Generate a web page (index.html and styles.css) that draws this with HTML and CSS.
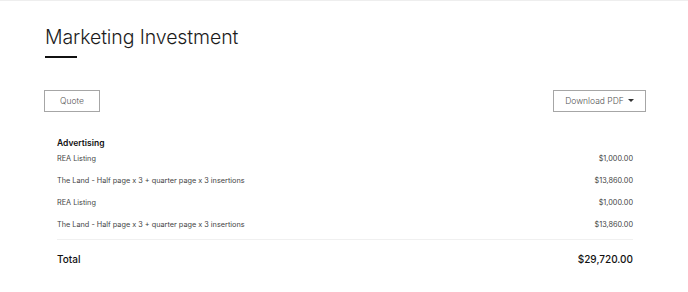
FILE: index.html
```html
<!DOCTYPE html>
<html lang="en">
<head>
<meta charset="utf-8">
<title>Marketing Investment</title>
<link rel="stylesheet" href="styles.css">
</head>
<body>
<main class="page">
  <header class="heading">
    <h1 class="title">Marketing Investment</h1>
    <span class="title-rule"></span>
  </header>

  <div class="toolbar">
    <button class="btn" type="button">Quote</button>
    <button class="btn btn-pdf" type="button">Download PDF <span class="caret"></span></button>
  </div>

  <section class="costs">
    <h2 class="group">Advertising</h2>
    <ul class="items">
      <li class="item"><span>REA Listing</span><span>$1,000.00</span></li>
      <li class="item"><span>The Land - Half page x 3 + quarter page x 3 insertions</span><span>$13,860.00</span></li>
      <li class="item"><span>REA Listing</span><span>$1,000.00</span></li>
      <li class="item"><span>The Land - Half page x 3 + quarter page x 3 insertions</span><span>$13,860.00</span></li>
    </ul>
    <div class="total"><span>Total</span><span>$29,720.00</span></div>
  </section>
</main>
</body>
</html>
```

FILE: styles.css
```css
* { box-sizing: border-box; }

html, body {
  margin: 0;
  padding: 0;
  background: #fff;
}

body {
  font-family: Inter, "Noto Sans", sans-serif;
  color: #222;
  border-top: 1px solid #eee;
}

.page {
  padding: 23px 42px 0 44px;
}

.heading {
  display: flex;
  flex-direction: column;
  padding-left: 1px;
}

.title {
  margin: 0;
  font-size: 19.5px;
  font-weight: 300;
  line-height: 26px;
  color: #1c1c1c;
  letter-spacing: -0.1px;
}

.title-rule {
  display: block;
  width: 32px;
  height: 2px;
  margin-top: 6px;
  background: #111;
}

.toolbar {
  display: flex;
  justify-content: space-between;
  margin-top: 32px;
}

.btn {
  height: 22px;
  padding: 0;
  border: 1px solid #a6a6a6;
  background: #fff;
  font-family: inherit;
  font-size: 8.5px;
  font-weight: 300;
  color: #555;
  display: inline-flex;
  align-items: center;
  justify-content: center;
  gap: 4px;
}

.btn:first-child { width: 56px; }
.btn-pdf { width: 93px; }

.caret {
  width: 0;
  height: 0;
  border-left: 3px solid transparent;
  border-right: 3px solid transparent;
  border-top: 3px solid #333;
  margin-bottom: 1px;
}

.costs {
  margin: 25px 13px 0 13px;
}

.group {
  margin: 0;
  font-size: 8.5px;
  font-weight: 600;
  line-height: 12px;
  color: #111;
}

.items {
  list-style: none;
  margin: 0;
  padding: 0;
}

.item {
  display: flex;
  justify-content: space-between;
  font-size: 7.3px;
  line-height: 10px;
  color: #444;
  margin-top: 12px;
}

.item:first-child { margin-top: 5px; }

.total {
  display: flex;
  justify-content: space-between;
  margin-top: 9px;
  border-top: 1px solid #f0f0f0;
  padding-top: 12px;
  font-size: 10px;
  font-weight: 500;
  line-height: 14px;
  color: #111;
}
```
